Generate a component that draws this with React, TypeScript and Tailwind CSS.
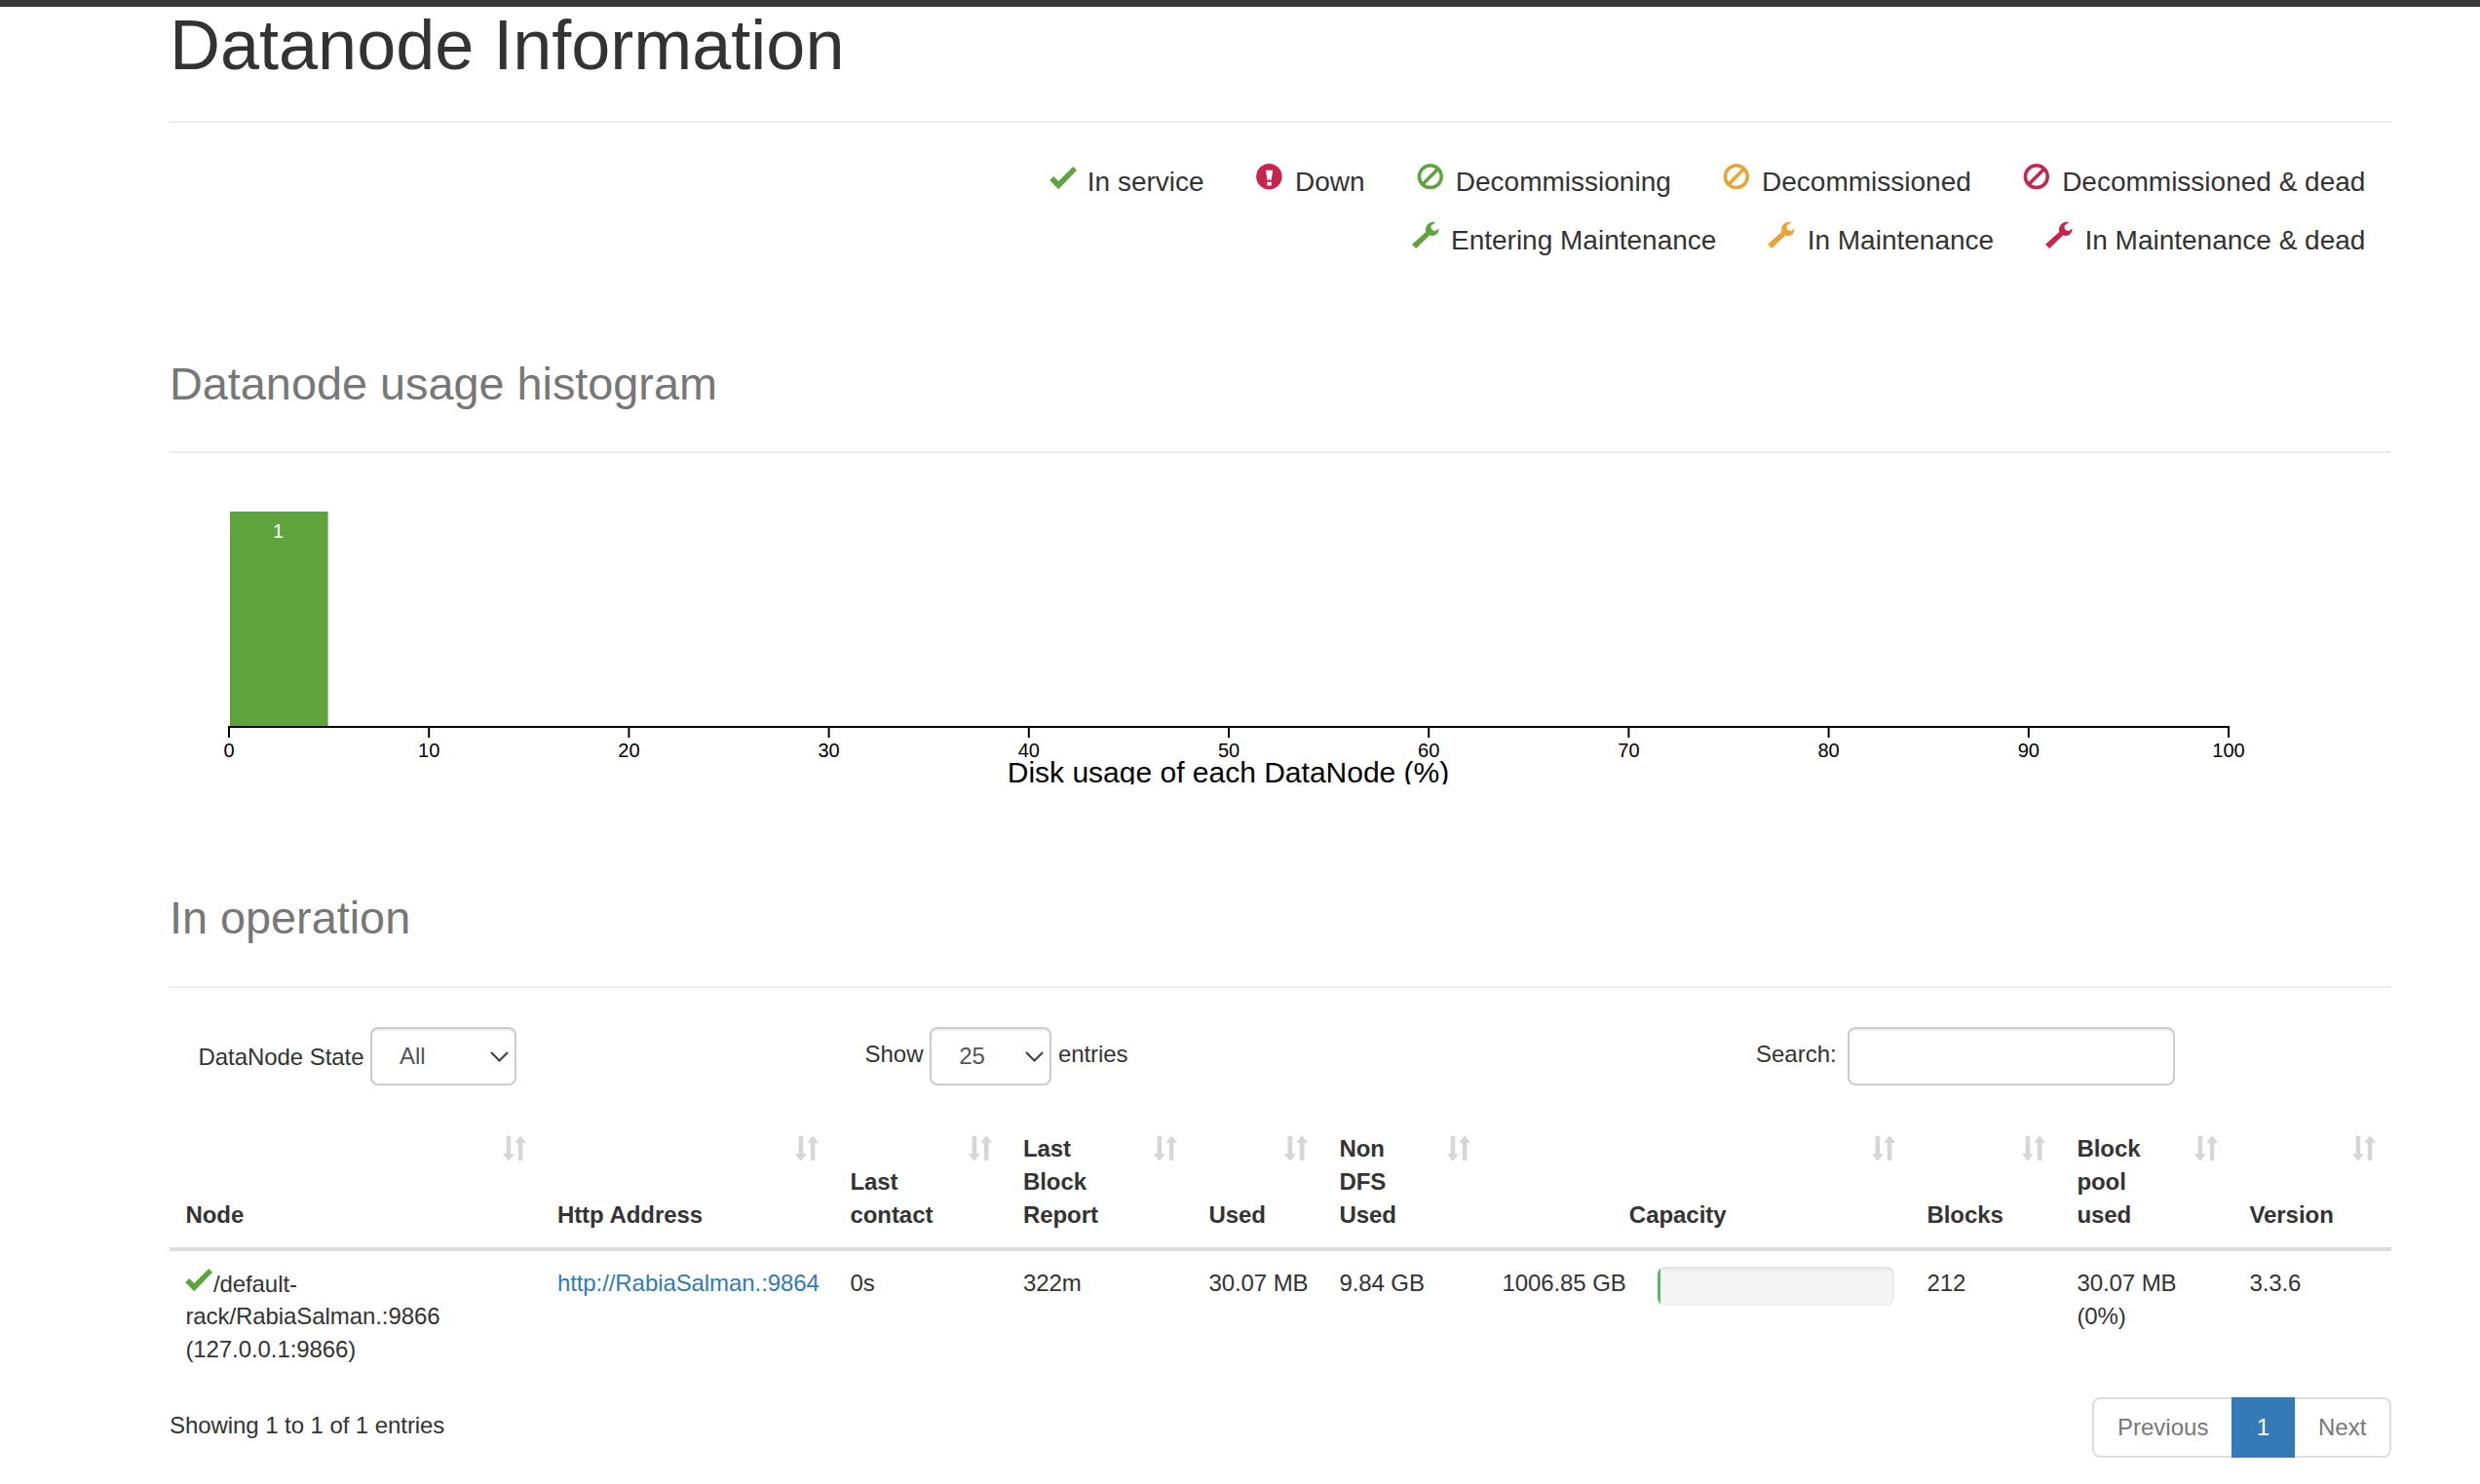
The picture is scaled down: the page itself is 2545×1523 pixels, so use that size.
import type { ReactNode } from "react";

const GREEN = "#5fa33e";
const ORANGE = "#eea236";
const RED = "#c7254e";

type IconProps = { color: string; className?: string };

function OkIcon({ color, className = "" }: IconProps) {
  return (
    <svg className={`h-7 w-7 shrink-0 overflow-visible ${className}`} viewBox="0 0 28 28" fill={color}>
      <path d="M2.2 17.1L6.2 13.1L11.2 18L26.2 3L30 6.8L11.2 26.2Z" />
    </svg>
  );
}

function DownIcon({ color, className = "" }: IconProps) {
  return (
    <svg className={`h-7 w-7 shrink-0 overflow-visible ${className}`} viewBox="0 0 28 28" fill={color}>
      <circle cx="14.4" cy="14.2" r="13.2" />
      <path d="M10.8 7.8h7.4l-1.6 10.3h-1l-.3-.9h-1.4l-.3.9h-1zM12.4 19.8h4.4v3.7h-4.4z" fill="#fff" />
    </svg>
  );
}

function BanIcon({ color, className = "" }: IconProps) {
  return (
    <svg
      className={`h-7 w-7 shrink-0 overflow-visible ${className}`}
      viewBox="0 0 28 28"
      fill="none"
      stroke={color}
      strokeWidth="3.5"
    >
      <circle cx="14.8" cy="14.2" r="11.4" />
      <path d="M6.8 22.2L22.8 6.2" />
    </svg>
  );
}

function WrenchIcon({ color, className = "" }: IconProps) {
  return (
    <svg className={`h-7 w-7 shrink-0 overflow-visible ${className}`} viewBox="0 0 28 28" fill={color}>
      <path
        transform="translate(-0.3 0.8)"
        d="M1.4 23L15.6 10.2C14.8 7.6 15.4 4.6 17.3 2.6C19.4.4 22.6-.6 25.4.5L20.8 3.6L21.2 7.6L25 9.4L28.8 6.8C28.9 9.2 28 11.6 26.1 13C24.2 14.3 21.8 14.6 19.4 13.8L5.4 27.3Z"
      />
    </svg>
  );
}

function SortIcon() {
  return (
    <svg className="h-[25px] w-6" viewBox="0 0 24 25" fill="#d6d6d6">
      <path d="M3.6 0h4.6v18H11.6L6.6 25H5.2L0 18H3.6zM15.8 25h4.6V7H24L18.8 0H17.4L12.4 7h3.4z" />
    </svg>
  );
}

function PageHeader({ children }: { children: ReactNode }) {
  return (
    <h1 className="h-[119px] border-b-2 border-[#eee] text-[72px] leading-[79px] text-[#333]">{children}</h1>
  );
}

function LegendItem({ icon, label }: { icon: ReactNode; label: string }) {
  return (
    <li className="flex items-start gap-[13.3px]">
      {icon}
      <span>{label}</span>
    </li>
  );
}

function Legend() {
  return (
    <div className="mt-10 flex flex-col gap-5 pr-[26.6px] text-[28px] leading-10">
      <ul className="flex h-10 justify-end gap-[52px] pt-[1px]">
        <LegendItem icon={<OkIcon color={GREEN} className="mt-[1px]" />} label="In service" />
        <LegendItem icon={<DownIcon color={RED} />} label="Down" />
        <LegendItem icon={<BanIcon color={GREEN} />} label="Decommissioning" />
        <LegendItem icon={<BanIcon color={ORANGE} />} label="Decommissioned" />
        <LegendItem icon={<BanIcon color={RED} />} label="Decommissioned & dead" />
      </ul>
      <ul className="flex h-10 justify-end gap-[52px] pt-[1px]">
        <LegendItem icon={<WrenchIcon color={GREEN} />} label="Entering Maintenance" />
        <LegendItem icon={<WrenchIcon color={ORANGE} />} label="In Maintenance" />
        <LegendItem icon={<WrenchIcon color={RED} />} label="In Maintenance & dead" />
      </ul>
    </div>
  );
}

function Histogram() {
  const ticks = [0, 10, 20, 30, 40, 50, 60, 70, 80, 90, 100];
  return (
    <svg className="block h-[340px] w-full overflow-hidden" fontFamily="Liberation Sans, Arial, sans-serif">
      <rect x="62" y="60" width="100.6" height="220" fill={GREEN} />
      <text x="111.5" y="86.5" fontSize="20" fill="#fff" textAnchor="middle">
        1
      </text>
      <path d="M60 281H2114" stroke="#000" strokeWidth="2" />
      {ticks.map((t) => (
        <g key={t} transform={`translate(${61 + t * 20.52} 0)`}>
          <path d="M0 280V292" stroke="#000" strokeWidth="2" />
          <text y="311.7" fontSize="20" textAnchor="middle">
            {t}
          </text>
        </g>
      ))}
      <text x="1086.5" y="338" fontSize="30" textAnchor="middle">
        Disk usage of each DataNode (%)
      </text>
    </svg>
  );
}

function Select({ value, className }: { value: string; className: string }) {
  return (
    <div
      className={`flex h-[60px] items-center justify-between rounded-lg border-2 border-[#ccc] pr-[6px] pl-7 text-[#555] shadow-[inset_0_2px_2px_rgba(0,0,0,0.075)] ${className}`}
    >
      {value}
      <svg className="h-[11px] w-[19px]" viewBox="0 0 19 11" fill="none" stroke="#444" strokeWidth="2.2">
        <path d="M1 1L9.5 9.5L18 1" />
      </svg>
    </div>
  );
}

function Controls() {
  return (
    <div className="mt-10 flex h-[60px] pl-[29.5px]">
      <div className="flex w-[684px] items-center gap-[6.5px]">
        <span className="pt-[2px] tracking-[-0.06px]">DataNode State</span>
        <Select value="All" className="w-[150px]" />
      </div>
      <div className="flex w-[914.5px] items-center gap-[6.7px]">
        <span className="-mt-[4px]">Show</span>
        <Select value="25" className="w-[125px]" />
        <span className="-mt-[4px] tracking-[-0.07px]">entries</span>
      </div>
      <div className="flex items-center gap-[11.5px]">
        <span className="-mt-[4px]">Search:</span>
        <div className="h-[60px] w-[336px] rounded-lg border-2 border-[#ccc] shadow-[inset_0_2px_2px_rgba(0,0,0,0.075)]" />
      </div>
    </div>
  );
}

const COLUMNS: string[][] = [
  ["Node"],
  ["Http Address"],
  ["Last", "contact"],
  ["Last", "Block", "Report"],
  ["Used"],
  ["Non", "DFS", "Used"],
  ["Capacity"],
  ["Blocks"],
  ["Block", "pool", "used"],
  ["Version"],
];

const GRID =
  "grid grid-cols-[381.5px_300.5px_177.5px_190.5px_134px_167px_436px_154px_177px_162px]";

function HeaderCell({ lines }: { lines: string[] }) {
  const centered = lines[0] === "Capacity";
  return (
    <div className="relative flex flex-col justify-end pr-[59px] pb-4 pl-[16.4px] font-bold tracking-[-0.05px]">
      {lines.map((line) => (
        <span key={line} className={centered ? "text-center" : "whitespace-nowrap"}>
          {line}
        </span>
      ))}
      <span className="absolute top-[21px] right-4">
        <SortIcon />
      </span>
    </div>
  );
}

function Table() {
  return (
    <div className="mt-[31px]">
      <div className={`${GRID} h-[139px] border-b-4 border-[#ddd]`}>
        {COLUMNS.map((lines, i) => (
          <HeaderCell key={i} lines={lines} />
        ))}
      </div>
      <div className={`${GRID} h-[134px] pt-4 tracking-[-0.08px] whitespace-nowrap *:pl-[16.4px]`}>
        <div>
          <div className="flex items-start pt-[1px]">
            <OkIcon color={GREEN} className="-mt-[2px] -ml-[2.3px] mr-[2.8px]" />
            /default-
          </div>
          <div className="-mt-[1px]">rack/RabiaSalman.:9866</div>
          <div>(127.0.0.1:9866)</div>
        </div>
        <div className="text-[#337ab7]">http://RabiaSalman.:9864</div>
        <div>0s</div>
        <div>322m</div>
        <div>30.07 MB</div>
        <div>9.84 GB</div>
        <div className="flex items-start justify-between pr-[17px]">
          1006.85 GB
          <div className="h-10 w-[243px] overflow-hidden rounded-lg bg-[#f5f5f5] shadow-[inset_0_2px_4px_rgba(0,0,0,0.1)]">
            <div className="h-full w-[3px] bg-[#5cb85c]" />
          </div>
        </div>
        <div>212</div>
        <div>
          30.07 MB
          <br />
          (0%)
        </div>
        <div>3.3.6</div>
      </div>
    </div>
  );
}

function TableFooter() {
  return (
    <div className="mt-4 flex justify-between">
      <div className="pt-3 tracking-[-0.07px]">Showing 1 to 1 of 1 entries</div>
      <div className="flex h-[62px] w-[307px] items-stretch rounded-lg border-2 border-[#ddd] text-[#777]">
        <span className="flex w-[141px] items-center pl-6">Previous</span>
        <span className="-my-[2px] flex w-[65px] items-center justify-center bg-[#337ab7] text-white">1</span>
        <span className="flex items-center pl-6">Next</span>
      </div>
    </div>
  );
}

export default function App() {
  return (
    <div className="h-[1523px] w-[2545px] overflow-hidden bg-white font-['Liberation_Sans',Arial,sans-serif] text-[24px] leading-[34px] text-[#333]">
      <div className="h-[7px] bg-[#393939]" />
      <main className="mr-[91px] ml-[174px]">
        <PageHeader>Datanode Information</PageHeader>
        <Legend />
        <section className="mt-20">
          <PageHeader>
            <small className="text-[46.8px] text-[#777]">Datanode usage histogram</small>
          </PageHeader>
          <Histogram />
        </section>
        <section className="mt-[90px]">
          <PageHeader>
            <small className="block pt-[7.5px] text-[46.8px] text-[#777]">In operation</small>
          </PageHeader>
          <Controls />
          <Table />
          <TableFooter />
        </section>
      </main>
    </div>
  );
}
